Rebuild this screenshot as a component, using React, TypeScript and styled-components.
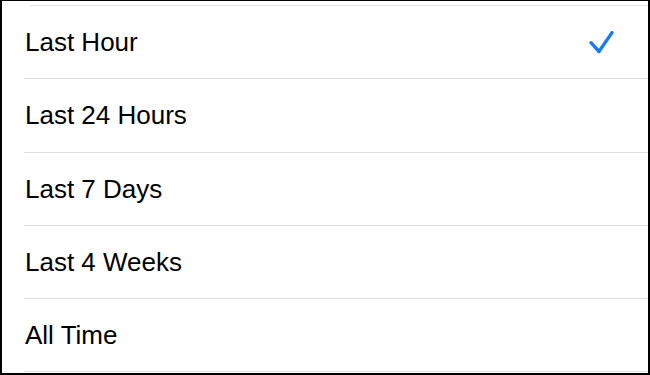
import React, { useState } from "react";
import styled, { createGlobalStyle } from "styled-components";

const GlobalStyle = createGlobalStyle`
  html, body {
    margin: 0;
    padding: 0;
    background: #ffffff;
  }
  * {
    box-sizing: border-box;
  }
`;

const Frame = styled.div`
  width: 650px;
  height: 375px;
  overflow: hidden;
  background: #ffffff;
  border-style: solid;
  border-color: #000000;
  border-width: 1px 2px 2px 2px;
  font-family: "Liberation Sans", Arial, sans-serif;
`;

const TopRule = styled.div`
  height: 1px;
  margin: 4px 0 0 28px;
  background: #e3e3e3;
`;

const List = styled.ul`
  list-style: none;
  margin: 0;
  padding: 0;
`;

const Row = styled.li`
  position: relative;
  height: 73.3px;
  display: flex;
  align-items: center;
  justify-content: space-between;
  padding: 0 34px 0 23px;
  cursor: pointer;

  &::after {
    content: "";
    position: absolute;
    left: 22px;
    right: 0;
    bottom: 0;
    height: 1px;
    background: #e0e0e0;
  }
`;

const Label = styled.span`
  font-size: 26px;
  color: #000000;
  line-height: 1;
  padding-bottom: 1px;
`;

const Check = styled.svg`
  width: 26px;
  height: 24px;
  margin-top: -2px;
  flex-shrink: 0;
`;

const options = [
  "Last Hour",
  "Last 24 Hours",
  "Last 7 Days",
  "Last 4 Weeks",
  "All Time",
];

const CheckMark = () => (
  <Check viewBox="0 0 26 24">
    <path
      d="M3 12.7 L11 21.5 L24 2.6"
      fill="none"
      stroke="#1a7cf4"
      strokeWidth={3.4}
      strokeLinecap="round"
      strokeLinejoin="round"
    />
  </Check>
);

const App = () => {
  const [selected, setSelected] = useState<string>("Last Hour");

  return (
    <>
      <GlobalStyle />
      <Frame>
        <TopRule />
        <List>
          {options.map((option) => (
            <Row key={option} onClick={() => setSelected(option)}>
              <Label>{option}</Label>
              {selected === option && <CheckMark />}
            </Row>
          ))}
        </List>
      </Frame>
    </>
  );
};

export default App;
